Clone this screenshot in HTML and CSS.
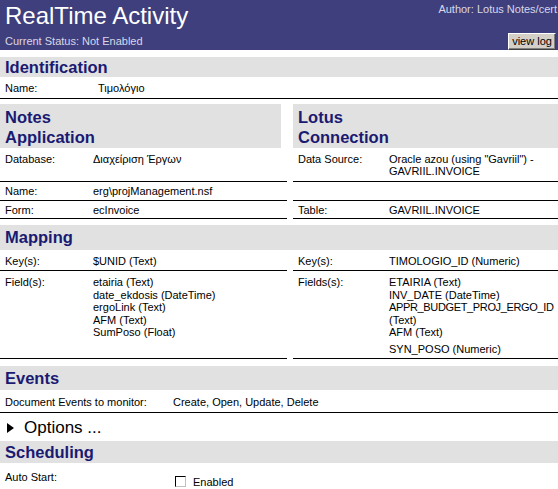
FILE: index.html
```html
<!DOCTYPE html>
<html>
<head>
<meta charset="utf-8">
<link rel="stylesheet" href="styles.css">
</head>
<body>
<div class="header">
  <div class="head-left">
    <div class="title">RealTime Activity</div>
    <div class="status">Current Status: Not Enabled</div>
  </div>
  <div class="head-right">
    <div class="author">Author: Lotus Notes/cert</div>
    <button class="btn">view log</button>
  </div>
</div>

<div class="band">Identification</div>
<div class="row line">
  <div class="lbl w93">Name:</div>
  <div class="val">Τιμολόγιο</div>
</div>

<div class="cols first">
  <div class="col left">
    <div class="band tall">Notes<br>Application</div>
    <div class="row line r-db"><div class="lbl w88">Database:</div><div class="val">Διαχείριση Έργων</div></div>
    <div class="row line r-nm"><div class="lbl w88">Name:</div><div class="val">erg\projManagement.nsf</div></div>
    <div class="row line r-fm"><div class="lbl w88">Form:</div><div class="val">ecInvoice</div></div>
  </div>
  <div class="col right">
    <div class="band tall">Lotus<br>Connection</div>
    <div class="row line r-db"><div class="lbl w91">Data Source:</div><div class="val">Oracle azou (using "Gavriil") -<br>GAVRIIL.INVOICE</div></div>
    <div class="row line r-nm"></div>
    <div class="row line r-fm"><div class="lbl w91">Table:</div><div class="val">GAVRIIL.INVOICE</div></div>
  </div>
</div>

<div class="band b-map">Mapping</div>
<div class="cols">
  <div class="col left">
    <div class="row line r-key"><div class="lbl w88">Key(s):</div><div class="val">$UNID (Text)</div></div>
    <div class="row line r-fld"><div class="lbl w88">Field(s):</div><div class="val">etairia (Text)<br>date_ekdosis (DateTime)<br>ergoLink (Text)<br>AFM (Text)<br>SumPoso (Float)</div></div>
  </div>
  <div class="col right">
    <div class="row line r-key"><div class="lbl w91">Key(s):</div><div class="val">TIMOLOGIO_ID (Numeric)</div></div>
    <div class="row line r-fld"><div class="lbl w91">Fields(s):</div><div class="val">ETAIRIA (Text)<br>INV_DATE (DateTime)<br><span class="tight">APPR_BUDGET_PROJ_ERGO_ID</span><br>(Text)<br>AFM (Text)<br><span class="last">SYN_POSO (Numeric)</span></div></div>
  </div>
</div>

<div class="band b-ev">Events</div>
<div class="row line r-ev">
  <div class="lbl w168">Document Events to monitor:</div>
  <div class="val">Create, Open, Update, Delete</div>
</div>

<div class="options"><span class="tri"></span>Options ...</div>

<div class="band b-sch">Scheduling</div>
<div class="row r-as">
  <div class="lbl w170">Auto Start:</div>
  <div class="val chk"><span class="box"></span>Enabled</div>
</div>
</body>
</html>
```

FILE: styles.css
```css
html, body {
  margin: 0;
  padding: 0;
  background: #ffffff;
}
body {
  width: 558px;
  overflow: hidden;
  font-family: "Liberation Sans", Arial, sans-serif;
  font-size: 11px;
  color: #000;
}
.header {
  background: #3f3f7d;
  height: 50px;
  display: flex;
  justify-content: space-between;
  margin-bottom: 7px;
}
.head-left {
  padding-left: 5px;
}
.title {
  color: #ffffff;
  font-size: 24px;
  line-height: 28px;
  padding-top: 2px;
}
.status {
  color: #d8d8e8;
  font-size: 11px;
  line-height: 13px;
  padding-top: 5px;
}
.head-right {
  display: flex;
  flex-direction: column;
  align-items: flex-end;
  width: 130px;
}
.author {
  color: #d8d8e8;
  font-size: 11px;
  line-height: 13px;
  padding-top: 3px;
  white-space: nowrap;
  margin-right: 1px;
}
.btn {
  margin-top: 17px;
  margin-right: 2px;
  height: 17px;
  width: 48px;
  padding: 0;
  font-family: "Liberation Sans", Arial, sans-serif;
  font-size: 11px;
  line-height: 13px;
  color: #000;
  background: #d4d0c8;
  border: 1px solid;
  border-color: #ffffff #404040 #404040 #ffffff;
  box-shadow: inset -1px -1px 0 #808080;
}
.band {
  background: #e1e1e1;
  color: #1a1a72;
  font-size: 16.5px;
  font-weight: bold;
  line-height: 20px;
  padding-left: 5px;
}
.band.tall {
  line-height: 20px;
  padding-top: 3px;
  padding-bottom: 1px;
}
.b-map { line-height: 25px; margin-top: 6px; }
.b-ev { line-height: 24px; margin-top: 7px; }
.b-sch { line-height: 22px; }
.row {
  display: flex;
  padding-left: 5px;
  line-height: 12px;
  padding-top: 5px;
  box-sizing: border-box;
  height: 22px;
}
.line {
  border-bottom: 1px solid #000;
}
.lbl { flex: none; }
.w93 { width: 93px; }
.w88 { width: 88px; }
.w91 { width: 91px; }
.w168 { width: 168px; }
.w170 { width: 170px; }
.val { white-space: nowrap; }
.cols {
  display: flex;
}
.cols.first {
  margin-top: 5px;
}
.col.left {
  flex: none;
  width: 287px;
}
.col.left .band {
  margin-right: 6px;
}
.col.right {
  margin-left: 6px;
  flex: 1;
  min-width: 0;
  overflow: hidden;
}
.r-db { height: 34px; padding-top: 5px; }
.r-nm { height: 19px; padding-top: 3px; }
.r-fm { height: 18px; padding-top: 3px; }
.r-key { height: 21px; padding-top: 5px; }
.r-fld { height: 88px; padding-top: 5px; line-height: 12.5px; }
.tight { letter-spacing: -0.35px; }
.last { display: inline-block; margin-top: 4px; }
.r-ev { height: 23px; padding-top: 6px; }
.options {
  height: 28px;
  display: flex;
  align-items: center;
  font-size: 17px;
  padding-left: 7px;
  padding-top: 2px;
  box-sizing: border-box;
}
.tri {
  width: 0;
  height: 0;
  border-left: 7px solid #000;
  border-top: 5px solid transparent;
  border-bottom: 5px solid transparent;
  margin-right: 10px;
}
.r-as { height: 26px; padding-top: 8px; }
.chk {
  display: flex;
  align-items: center;
  margin-top: 3px;
}
.box {
  width: 9px;
  height: 9px;
  border: 1px solid #000;
  border-right-color: #c0c0c0;
  border-bottom-color: #c0c0c0;
  background: #fff;
  margin-right: 7px;
}
```
